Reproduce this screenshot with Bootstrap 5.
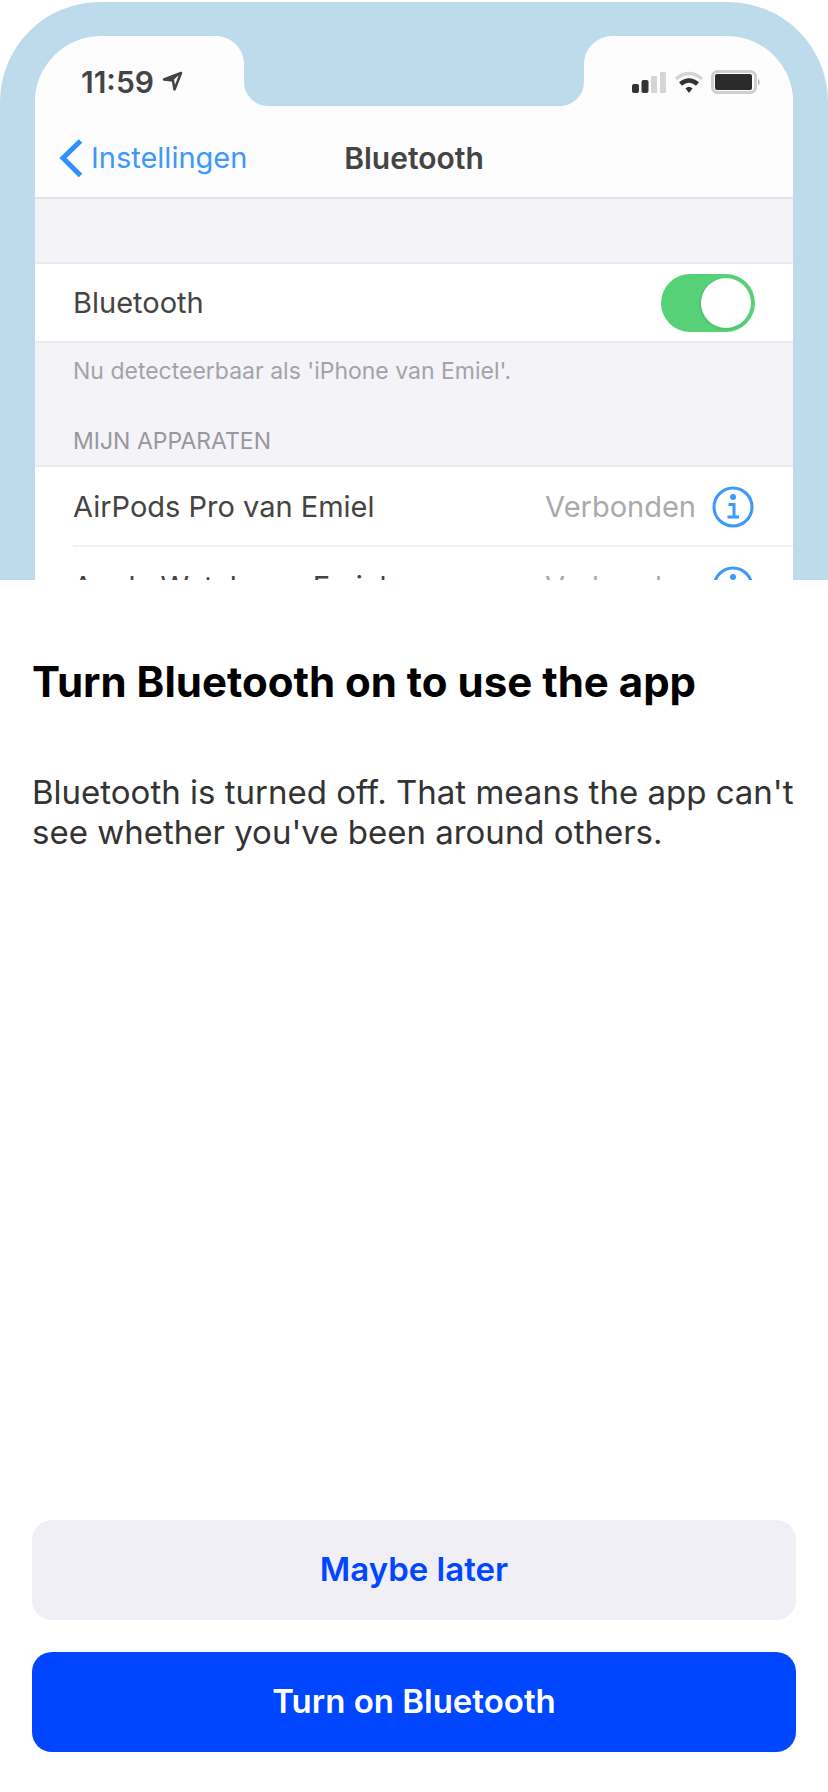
<!DOCTYPE html>
<html lang="en">
<head>
<meta charset="utf-8">
<meta name="viewport" content="width=device-width, initial-scale=1">
<title>Turn Bluetooth on</title>
<link href="https://cdn.jsdelivr.net/npm/bootstrap@5.3.0/dist/css/bootstrap.min.css" rel="stylesheet">
<style>
  :root { --frame: #bedbeb; --ios-blue: #3c98fd; --action: #0046ff; --ink: #444; }
  body { font-family: Inter, "Liberation Sans", sans-serif; color: #000; background: #fff; }

  /* Phone illustration */
  .phone { height: 580px; padding-top: 2px; overflow: hidden; color: var(--ink); font-size: 29px; line-height: 36px; }
  .phone-frame { background: var(--frame); border-radius: 100px 100px 0 0; padding: 34px 35px 0; height: 100%; }
  .phone-screen { background: #f3f3f8; border-radius: 66px 66px 0 0; overflow: hidden; height: 100%; }
  .status-row { height: 70px; background: linear-gradient(var(--frame) 50%, #fdfdfd 50%); }
  .ear { background: #fdfdfd; flex: 0 0 209px; padding-top: 34px; }
  .ear-left { border-radius: 66px 28px 0 0; padding-left: 46px; }
  .ear-right { border-radius: 28px 66px 0 0; padding-right: 31px; }
  .notch { background: var(--frame); border-radius: 0 0 24px 24px; }
  .clock { font-size: 30px; line-height: 24px; font-weight: 600; }
  .title-row { display: grid; grid-template-columns: 1fr auto 1fr; height: 93px; padding: 12px 24px 0; background: #fdfdfd; border-bottom: 2px solid #e3e3e5; }
  .title-row a { color: var(--ios-blue); }
  .title-row span { font-size: 30px; }
  .cell-row { height: 81px; margin-top: 63px; padding: 0 38px; background: #fff; border: 2px solid #ebebee; border-width: 2px 0; }
  .cell-list { background: #fff; border-top: 2px solid #ebebee; padding-left: 38px; }
  .cell-list li { height: 80px; padding: 2px 39px 0 0; border-bottom: 2px solid #f2f2f3; }
  .note-text { font-size: 23px; line-height: 28px; color: #a3a3a7; padding: 0 38px; margin: 14px 0 0; }
  .section-title { margin: 42px 0 10px; color: #98989c; }
  .state-text { color: #aaaaac; }
  .form-check-input.ios-switch { width: 94px; height: 58px; margin: 0; border: 0; border-radius: 29px; }
  .form-check-input.ios-switch:checked { background-color: #57d177; background-position: right center; background-image: url("data:image/svg+xml,%3csvg xmlns='http://www.w3.org/2000/svg' viewBox='-29 -29 58 58'%3e%3ccircle cx='-1' cy='1' r='26' fill='%2350c470'/%3e%3ccircle r='25' fill='%23fff'/%3e%3c/svg%3e"); }

  /* Message */
  .message { padding: 76px 32px 0; }
  .message h1 { font-size: 42px; line-height: 52px; font-weight: 700; margin-bottom: 64px; }
  .message p { font-size: 33px; line-height: 40px; color: #333; }
  .actions { padding: 32px 32px 40px; gap: 32px; }
  .btn-action { height: 100px; border: 0; border-radius: 20px; font-size: 33px; font-weight: 600; }
  .btn-later, .btn-later:hover { background: #f0eff5; color: var(--action); }
  .btn-on, .btn-on:hover { background: var(--action); color: #fff; }
</style>
</head>
<body class="d-flex flex-column min-vh-100">
<svg class="d-none" aria-hidden="true">
  <symbol id="info" viewBox="0 0 42 42">
    <circle cx="21" cy="21" r="19" fill="none" stroke="#3c98fd" stroke-width="3"/>
    <circle cx="21" cy="11" r="3" fill="#3c98fd"/>
    <path d="M16.500 18.500h5.500v13M15.500 31h11.500" fill="none" stroke="#3c98fd" stroke-width="3"/>
  </symbol>
</svg>

<section class="phone" aria-label="Bluetooth settings">
  <div class="phone-frame">
    <div class="phone-screen">
      <div class="status-row d-flex">
        <div class="ear ear-left d-flex align-items-start gap-2">
          <span class="clock">11:59</span>
          <svg width="22" height="22" viewBox="0 0 22 22" aria-hidden="true"><path d="M2 9.500 19 3 12.500 19.500 11 10.500Z" fill="none" stroke="#444" stroke-width="2.500" stroke-linejoin="round"/><path d="M2 9.500 19 3 11 10.500Z" fill="#444"/></svg>
        </div>
        <div class="notch flex-grow-1"></div>
        <div class="ear ear-right d-flex align-items-start justify-content-end">
          <svg width="130" height="24" viewBox="0 0 130 24" aria-hidden="true">
            <g fill="#333"><rect x="0" y="14" width="7" height="9" rx="2"/><rect x="9.500" y="10" width="7" height="13" rx="2"/></g>
            <g fill="#d5d5d5"><rect x="19" y="6" width="6" height="17" rx="1"/><rect x="28" y="2" width="6" height="21" rx="1"/></g>
            <path d="M44 9Q57 -2 70 9" fill="none" stroke="#d5d5d5" stroke-width="3.500"/>
            <path d="M48.500 14Q57 7 65.500 14" fill="none" stroke="#333" stroke-width="4.500"/>
            <path d="M53.500 18.500Q57 15 60.500 18.500L57 23Z" fill="#333"/>
            <rect x="80.500" y="1.500" width="43" height="21" rx="5" fill="#fdfdfd" stroke="#cfcfcf" stroke-width="3"/>
            <rect x="83" y="4" width="37" height="16" rx="2" fill="#2b2b2b"/>
            <path d="M126 8.500Q129.500 12 126 16Z" fill="#bbb"/>
          </svg>
        </div>
      </div>

      <nav class="title-row align-items-center">
        <a href="#" class="d-flex align-items-center gap-2 text-decoration-none"><svg width="24" height="40" viewBox="0 0 24 40" aria-hidden="true"><path d="M21.500 3 4 20 21.500 37.500" fill="none" stroke="#2f8ffc" stroke-width="5"/></svg>Instellingen</a>
        <span class="fw-semibold">Bluetooth</span>
      </nav>

      <div class="cell-row d-flex align-items-center justify-content-between">
        <label for="bt">Bluetooth</label>
        <div class="form-switch p-0 d-flex"><input class="form-check-input ios-switch" type="checkbox" role="switch" id="bt" checked></div>
      </div>

      <p class="note-text">Nu detecteerbaar als 'iPhone van Emiel'.</p>
      <h2 class="note-text section-title fw-normal">MIJN APPARATEN</h2>

      <ul class="cell-list list-unstyled mb-0">
        <li class="d-flex align-items-center"><span>AirPods Pro van Emiel</span><span class="state-text ms-auto me-3">Verbonden</span><svg width="42" height="42" role="img" aria-label="Info"><use href="#info"/></svg></li>
        <li class="d-flex align-items-center"><span>Apple Watch van Emiel</span><span class="state-text ms-auto me-3">Verbonden</span><svg width="42" height="42" role="img" aria-label="Info"><use href="#info"/></svg></li>
      </ul>
    </div>
  </div>
</section>

<main class="message flex-grow-1">
  <h1>Turn Bluetooth on to use the app</h1>
  <p>Bluetooth is turned off. That means the app can't see whether you've been around others.</p>
</main>

<footer class="actions d-flex flex-column">
  <button type="button" class="btn btn-action btn-later w-100">Maybe later</button>
  <button type="button" class="btn btn-action btn-on w-100">Turn on Bluetooth</button>
</footer>
<script src="https://cdn.jsdelivr.net/npm/bootstrap@5.3.0/dist/js/bootstrap.bundle.min.js"></script>
</body>
</html>
